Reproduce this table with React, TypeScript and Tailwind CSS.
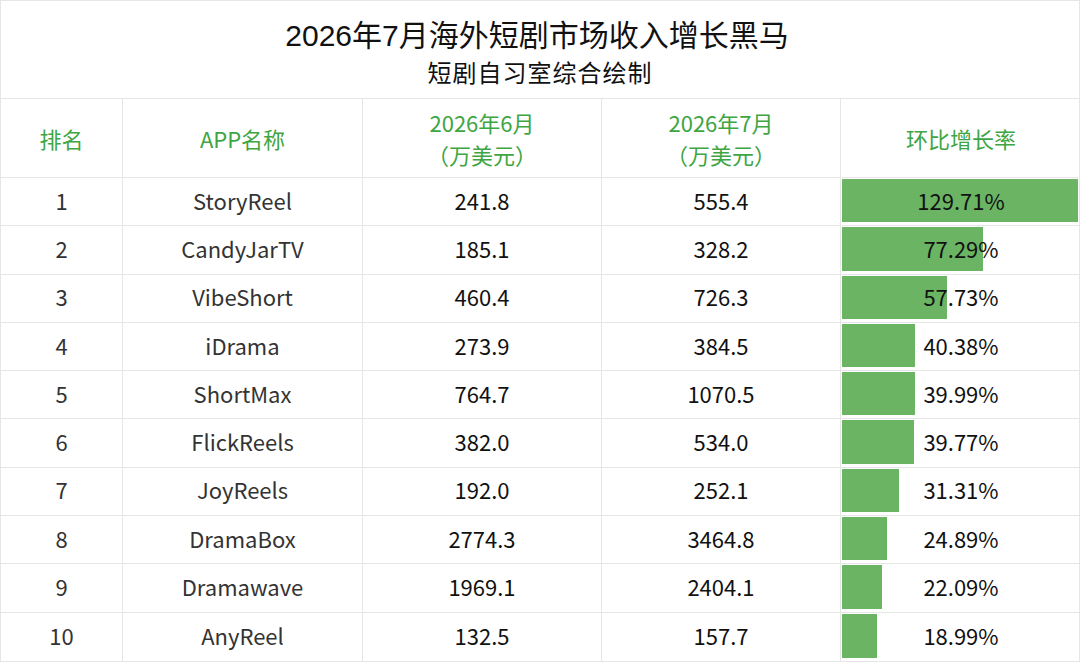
import React from 'react';

interface Row {
  rank: number;
  app: string;
  june: string;
  july: string;
  growth: number;
}

const rows: Row[] = [
  { rank: 1, app: 'StoryReel', june: '241.8', july: '555.4', growth: 129.71 },
  { rank: 2, app: 'CandyJarTV', june: '185.1', july: '328.2', growth: 77.29 },
  { rank: 3, app: 'VibeShort', june: '460.4', july: '726.3', growth: 57.73 },
  { rank: 4, app: 'iDrama', june: '273.9', july: '384.5', growth: 40.38 },
  { rank: 5, app: 'ShortMax', june: '764.7', july: '1070.5', growth: 39.99 },
  { rank: 6, app: 'FlickReels', june: '382.0', july: '534.0', growth: 39.77 },
  { rank: 7, app: 'JoyReels', june: '192.0', july: '252.1', growth: 31.31 },
  { rank: 8, app: 'DramaBox', june: '2774.3', july: '3464.8', growth: 24.89 },
  { rank: 9, app: 'Dramawave', june: '1969.1', july: '2404.1', growth: 22.09 },
  { rank: 10, app: 'AnyReel', june: '132.5', july: '157.7', growth: 18.99 },
];

const maxGrowth = 129.71;
const cols = 'grid grid-cols-[122px_240px_239px_239px_240px]';
const cell = 'flex items-center justify-center border-r border-[#e6e6e6] last:border-r-0';

export default function App() {
  return (
    <div className="w-[1080px] h-[662px] bg-white flex flex-col border border-[#e6e6e6] font-['Noto_Sans_CJK_SC',sans-serif] overflow-hidden">
      {/* Title */}
      <div className="h-[98px] pt-[6px] flex flex-col items-center justify-center border-b border-[#e6e6e6]">
        <h1 className="text-[30px] leading-[38px] text-[#111] font-['Liberation_Sans','Noto_Sans_CJK_SC',sans-serif] pr-[6px]">
          2026年7月海外短剧市场收入增长黑马
        </h1>
        <p className="text-[24px] leading-[34px] text-[#111] tracking-[1px]">短剧自习室综合绘制</p>
      </div>

      {/* Header */}
      <div className={`${cols} h-[79px] border-b border-[#e6e6e6] text-[22px] leading-[32px] text-[#3ea543]`}>
        <div className={cell}>排名</div>
        <div className={cell}>APP名称</div>
        <div className={`${cell} flex-col`}>
          <span>2026年6月</span>
          <span>（万美元）</span>
        </div>
        <div className={`${cell} flex-col`}>
          <span>2026年7月</span>
          <span>（万美元）</span>
        </div>
        <div className={cell}>环比增长率</div>
      </div>

      {/* Rows */}
      <div className="flex-1 grid grid-rows-10">
        {rows.map((r) => (
          <div
            key={r.rank}
            className={`${cols} border-b border-[#e6e6e6] last:border-b-0 text-[22px] text-[#333]`}
          >
            <div className={`${cell} pb-[3px]`}>{r.rank}</div>
            <div className={`${cell} pb-[3px]`}>{r.app}</div>
            <div className={`${cell} pb-[3px] text-[#111]`}>{r.june}</div>
            <div className={`${cell} pb-[3px] text-[#111]`}>{r.july}</div>
            <div className="relative flex items-center justify-center pb-[3px]">
              <div
                className="absolute left-[1px] top-[1px] bottom-[3px] bg-[#6bb464]"
                style={{ width: `${(r.growth / maxGrowth) * 236}px` }}
              />
              <span className="relative text-[#111]">{r.growth.toFixed(2)}%</span>
            </div>
          </div>
        ))}
      </div>
    </div>
  );
}
